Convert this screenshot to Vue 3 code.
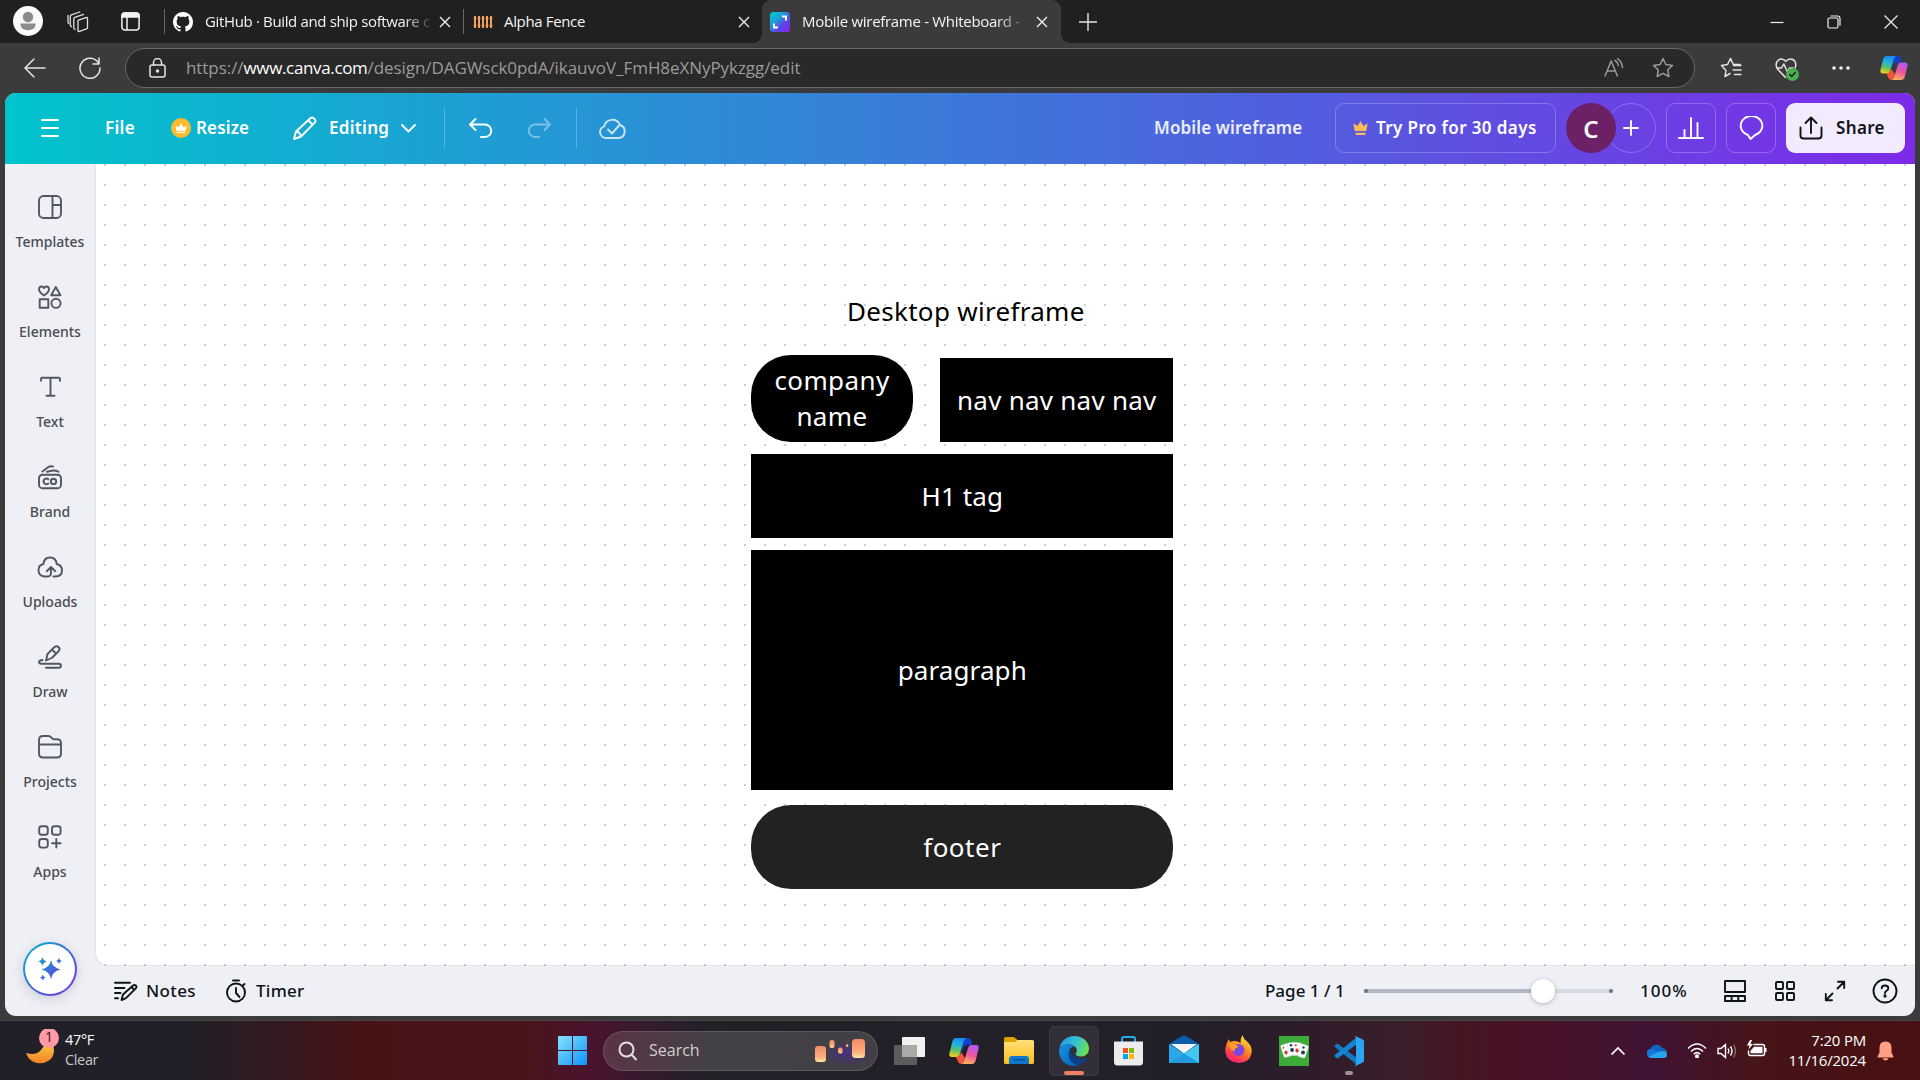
<script setup>
const tools = [
  { id: 'templates', label: 'Templates' },
  { id: 'elements', label: 'Elements' },
  { id: 'text', label: 'Text' },
  { id: 'brand', label: 'Brand' },
  { id: 'uploads', label: 'Uploads' },
  { id: 'draw', label: 'Draw' },
  { id: 'projects', label: 'Projects' },
  { id: 'apps', label: 'Apps' },
]
</script>

<template>
  <div class="screen">
    <!-- Tab strip -->
    <div class="tabs">
      <svg class="profile" width="30" height="30" viewBox="0 0 30 30"><circle cx="15" cy="15" r="15" fill="#fafafa"/><circle cx="15" cy="11" r="5.2" fill="#8c8c8c"/><path d="M7.5 17.5h15v1c0 3.600-3.400 5.700-7.500 5.700s-7.500-2.100-7.500-5.700z" fill="#8c8c8c"/></svg>
      <svg class="spaces" width="22" height="22" viewBox="0 0 22 22" fill="none" stroke="#e0e0e0" stroke-width="1.300" stroke-linejoin="round" stroke-linecap="round"><path d="M11.500 9.200l7.500-2.600q1.500-.4 1.500 1v8.800q0 1.200-1 1.500l-7 2.500q-1.500.4-1.500-1v-9.200q0-.8.5-1zM8 18.300q-1.200-.2-1.200-1.500V8q0-1.300 1-1.700l8.700-3M4.500 15.500q-1.200-.2-1.200-1.500V5.500q0-1.300 1-1.700l8.500-2.800M1.800 12.500Q1 12 1 11V4.500"/></svg>
      <svg class="tabact" width="19" height="19" viewBox="0 0 19 19" fill="none" stroke="#f2f2f2" stroke-width="1.500"><rect x=".9" y=".9" width="17.200" height="17.200" rx="3"/><path d="M1 3.600Q1 1 3.600 1h11.800Q18 1 18 3.600V5H1z" fill="#f2f2f2"/><path d="M6 5v13"/></svg>
      <div class="sep s1"></div>
      <div class="tab t1">
        <svg width="20" height="20" viewBox="0 0 16 16" fill="#fff"><path d="M8 0C3.580 0 0 3.580 0 8c0 3.540 2.290 6.530 5.470 7.590.4.070.55-.17.55-.38 0-.19-.01-.82-.01-1.490-2.010.37-2.530-.49-2.690-.94-.09-.23-.48-.94-.82-1.130-.28-.15-.68-.52-.01-.53.630-.010 1.080.580 1.230.820.720 1.210 1.870.870 2.330.660.070-.52.280-.87.510-1.070-1.780-.2-3.640-.89-3.640-3.950 0-.87.310-1.590.820-2.150-.08-.2-.36-1.020.080-2.120 0 0 .67-.21 2.200.820.640-.18 1.320-.27 2-.27s1.360.090 2 .27c1.530-1.040 2.200-.82 2.200-.82.440 1.100.160 1.920.080 2.120.510.560.820 1.270.820 2.150 0 3.070-1.870 3.750-3.650 3.950.290.250.540.730.540 1.480 0 1.070-.01 1.930-.01 2.200 0 .210.150.460.550.380A8.010 8.010 0 0 0 16 8c0-4.420-3.580-8-8-8z"/></svg>
        <span class="ttl">GitHub · Build and ship software c</span>
        <svg class="x" width="12" height="12" viewBox="0 0 12 12"><path d="M1 1l10 10M11 1L1 11"/></svg>
      </div>
      <div class="sep s2"></div>
      <div class="tab t2">
        <svg width="20" height="14" viewBox="0 0 20 14"><path d="M0 3.500h20M0 10.500h20" stroke="#7c4a28" stroke-width="1.500"/><path d="M2 1v12M6 1v12M10 1v12M14 1v12M18 1v12" stroke="#f0a060" stroke-width="2"/></svg>
        <span class="ttl">Alpha Fence</span>
        <svg class="x" width="12" height="12" viewBox="0 0 12 12"><path d="M1 1l10 10M11 1L1 11"/></svg>
      </div>
      <div class="tab t3">
        <svg width="20" height="20" viewBox="0 0 20 20"><defs><linearGradient id="fav" x1="0" y1="0" x2="1" y2="1"><stop offset="0" stop-color="#00c9cf"/><stop offset=".35" stop-color="#18a5d5"/><stop offset=".65" stop-color="#5b43e8"/><stop offset="1" stop-color="#8a25e8"/></linearGradient></defs><rect width="20" height="20" rx="3.500" fill="url(#fav)"/><path d="M12 4.500h4v4M4 11.500v4h4" fill="none" stroke="#fff" stroke-width="2"/></svg>
        <span class="ttl">Mobile wireframe - Whiteboard -</span>
        <svg class="x" width="12" height="12" viewBox="0 0 12 12"><path d="M1 1l10 10M11 1L1 11"/></svg>
      </div>
      <svg class="newtab" width="18" height="18" viewBox="0 0 18 18"><path d="M9 0v18M0 9h18" stroke="#e6e6e6" stroke-width="1.400"/></svg>
      <div class="winbtns">
        <svg width="14" height="14" viewBox="0 0 14 14"><path d="M.5 7.500h13"/></svg>
        <svg width="14" height="14" viewBox="0 0 14 14"><rect x="1" y="3" width="10" height="10" rx="1.500"/><path d="M3.500 1h7Q13 1 13 3.500v7"/></svg>
        <svg width="14" height="14" viewBox="0 0 14 14"><path d="M.5.5l13 13M13.500.5l-13 13"/></svg>
      </div>
    </div>

    <!-- Address row -->
    <div class="nav">
      <svg class="back" width="22" height="20" viewBox="0 0 22 20"><path d="M10 1L1 10l9 9M1 10h20"/></svg>
      <svg class="reload" width="22" height="22" viewBox="0 0 22 22"><path d="M19.500 6A10 10 0 1 0 21 11M20 1v6h-6"/></svg>
      <div class="address">
        <svg class="lock" width="17" height="20" viewBox="0 0 17 20"><rect x="1" y="7" width="15" height="12" rx="2"/><path d="M4.500 7V4.500a4 4 0 0 1 8 0V7"/><circle cx="8.500" cy="13" r="1" fill="#fff"/></svg>
        <span class="url">https://<b>www.canva.com</b>/design/DAGWsck0pdA/ikauvoV_FmH8eXNyPykzgg/edit</span>
        <svg class="aloud" width="20" height="20" viewBox="0 0 20 20"><path d="M1 18L7.200 3l6.200 15M3 13h8.500M11 2.500q3 1.800 3.500 5M13.500.8q4.500 2.500 5 8.700"/></svg>
        <svg class="star" width="22" height="22" viewBox="0 0 22 22"><path d="M11 1.500l2.900 6 6.600.9-4.800 4.600 1.200 6.500-5.900-3.200-5.900 3.200 1.200-6.500L1.500 8.400l6.600-.9z"/></svg>
      </div>
      <svg class="favs" width="22" height="22" viewBox="0 0 22 22"><path d="M6 13.500L1.500 8.400l6-.9L10.500 1.500l2.900 6h6.600M10 16.500l-5 3 1-6M13.500 8.500H21M13 13h8M14.500 17.500H21"/></svg>
      <svg class="heart" width="24" height="24" viewBox="0 0 24 24"><path d="M10.500 20.500L2.500 12C-.5 7.500 2 2 6.500 2q2.600 0 4.300 2.400Q12.600 2 15.500 2c4.500 0 6.500 5 4.500 9M2 11h4.500l2.300-4 3.700 8 2-4H18"/><circle cx="17.500" cy="17.500" r="6.500" fill="#4caf50" stroke="none"/><path d="M14.700 17.500l2 2 3.600-4" stroke="#1e1e1e"/></svg>
      <svg class="dots" width="18" height="4" viewBox="0 0 18 4"><g fill="#f2f2f2" stroke="none"><circle cx="2" cy="2" r="1.800"/><circle cx="9" cy="2" r="1.800"/><circle cx="16" cy="2" r="1.800"/></g></svg>
      <svg class="copilot" width="28" height="26" viewBox="0 0 30 28"><use href="#copilot"/></svg>
    </div>

    <!-- Editor -->
    <div class="app">
      <header class="head">
        <svg class="burger" width="18" height="18" viewBox="0 0 18 18"><path d="M1 1h16M1 9h16M1 17h16"/></svg>
        <span class="file">File</span>
        <svg class="crown" width="20" height="20" viewBox="0 0 20 20"><circle cx="10" cy="10" r="10" fill="#fdbc2e"/><path d="M5.500 12.800L4.300 7.500l3.200 2L10 5.500l2.500 4 3.200-2-1.200 5.300zM5.800 13.700h8.400v1.300H5.800z" fill="#fff"/></svg>
        <span class="resize">Resize</span>
        <svg class="pencil" width="24" height="24" viewBox="0 0 24 24"><path d="M1 23l2-7.500L17.300 2.200q1.700-1.500 3.500.2l.8.800q1.700 1.800.2 3.400L8 20.500zM15.500 4.500l4.200 4.200M3 15.500q3.500 0 5 5"/></svg>
        <span class="editing">Editing</span>
        <svg class="chev" width="15" height="9" viewBox="0 0 15 9"><path d="M1 1l6.500 6.500L14 1"/></svg>
        <i class="vr"></i>
        <svg class="undo" width="24" height="20" viewBox="0 0 24 20"><path d="M6.500 1L1 6.500 6.500 12M1.500 6.500H16a6.200 6.200 0 0 1 0 12.500h-4"/></svg>
        <svg class="redo" width="24" height="20" viewBox="0 0 24 20"><path d="M17.500 1L23 6.500 17.500 12M22.500 6.500H8a6.200 6.200 0 0 0 0 12.500h4"/></svg>
        <i class="vr v2"></i>
        <svg class="cloud" width="27" height="22" viewBox="0 0 27 22"><path d="M12 21H7a6 6 0 0 1-1.800-11.700A8.300 8.300 0 0 1 21 8a6.700 6.700 0 0 1-1 13zM9 12.500l4 4L20 8.500"/></svg>
        <span class="doc">Mobile wireframe</span>
        <div class="pro"><svg width="15" height="16" viewBox="0 0 15 16" fill="#ffb956" stroke="none"><path d="M1.800 11L.3 3.500 4.600 6 7.500 1l2.900 5 4.300-2.500L13.200 11zM2.500 12.800h10V15h-10z"/></svg><span>Try Pro for 30 days</span></div>
        <div class="people"><div class="add"><svg width="16" height="16" viewBox="0 0 16 16"><path d="M8 1v14M1 8h14"/></svg></div><div class="me">C</div></div>
        <div class="sq"><svg width="26" height="22" viewBox="0 0 26 22"><path d="M1 21h24M6.500 21v-8M13 21V1M19.500 21V6"/></svg></div>
        <div class="sq"><svg width="25" height="24" viewBox="0 0 25 24"><path d="M9 19A10.800 9.800 0 1 1 16 19L11.500 23z"/></svg></div>
        <div class="share"><svg width="24" height="24" viewBox="0 0 24 24"><path d="M12 17V2M6.500 7L12 1.500 17.500 7M1.500 11.500v8q0 3 3 3h15q3 0 3-3v-8"/></svg><span>Share</span></div>
      </header>

      <div class="body">
        <aside class="side">
          <div v-for="t in tools" :key="t.id" class="tool">
            <svg width="26" height="26" viewBox="0 0 26 26">
              <g v-if="t.id === 'templates'"><rect x="2" y="2" width="22" height="22" rx="4.500"/><path d="M15.500 2v22M15.500 11H24"/></g>
              <g v-else-if="t.id === 'elements'"><path d="M7 11.500Q2 8 2 5.500 2 2.500 4.500 2.500q1.800 0 2.500 1.600.7-1.600 2.500-1.600Q12 2.500 12 5.500 12 8 7 11.500zM18.800 3l4.700 8.200H14.200zM2.700 15.200h8.600v8.600H2.700z"/><circle cx="19" cy="19.300" r="4.600"/></g>
              <g v-else-if="t.id === 'text'"><path d="M4 6.800V5q0-1.200 1.200-1.200h16.600q1.200 0 1.200 1.200v1.800M13.500 4v17.500M9.500 21.800h8"/></g>
              <g v-else-if="t.id === 'brand'"><rect x="2" y="10.700" width="22" height="13.500" rx="3.500"/><path d="M11.300 15.300a2.800 2.800 0 1 0 0 4.200M5.500 7.500L11 3.300q2-1.500 5-.8M10 7.800l4.500-1q4-.8 7 1"/><circle cx="16.500" cy="17.400" r="2.700"/></g>
              <g v-else-if="t.id === 'uploads'"><path d="M10.500 22.500H7.500Q1.500 22 1.500 16.200 1.500 11 6.500 10 7 3.500 13 3.500t6.700 6.500q5.300 1.300 5.300 6.500 0 6-7 6h-1.500M10.500 22.500Q14 22.500 14 19v-5M9.700 17.200L14 13l4.200 4.200"/></g>
              <g v-else-if="t.id === 'draw'"><path d="M9 16.500l1.500-6.500 7-7q2-1.700 4 0t.3 4l-7 7zM15 5.500l4 4M5.500 16Q2 16.300 2 18t2.500 1.700h17q2.500 0 2.500 2t-2.500 2H9"/></g>
              <g v-else-if="t.id === 'projects'"><path d="M2 9V6q0-4 4-4h5.500q1.500 0 2.500 1.200l1.500 1.500q.7.600 1.700.6H20q4 0 4 4V19.500q0 4-4 4H6q-4 0-4-4zM2 10.500h22"/></g>
              <g v-else><rect x="2.200" y="2.200" width="8.600" height="8.600" rx="2.500"/><rect x="15" y="2.200" width="8.600" height="8.600" rx="2.500"/><rect x="2.200" y="15" width="8.600" height="8.600" rx="2.500"/><path d="M19.300 15v8.600M15 19.300h8.600"/></g>
            </svg>
            <span>{{ t.label }}</span>
          </div>
          <div class="magic">
            <svg width="26" height="26" viewBox="0 0 26 26"><defs><linearGradient id="mg" x1="0" y1="0" x2="1" y2="1"><stop offset="0" stop-color="#12a5b8"/><stop offset=".5" stop-color="#3b6fd6"/><stop offset="1" stop-color="#7a35dd"/></linearGradient></defs><path fill="url(#mg)" d="M14 4q1.500 8 9.500 9.500Q15.500 15 14 23.500 12.500 15 4.500 13.500 12.500 12 14 4zM5.500 1q.7 3.800 4.500 4.500Q6.200 6.200 5.500 10 4.800 6.200 1 5.500 4.800 4.800 5.500 1zM22 2q.5 2.500 3 3-2.500.5-3 3-.5-2.500-3-3 2.500-.5 3-3zM5.800 18.500q.5 2.500 3 3-2.500.5-3 3-.5-2.500-3-3 2.500-.5 3-3z"/></svg>
          </div>
        </aside>
        <main class="work">
          <div class="canvas">
            <p class="title">Desktop wireframe</p>
            <div class="shape company">company<br>name</div>
            <div class="shape navs">nav nav nav nav</div>
            <div class="shape h1">H1 tag</div>
            <div class="shape para">paragraph</div>
            <div class="shape foot">footer</div>
          </div>
          <footer class="status">
            <svg class="i-notes" width="24" height="20" viewBox="0 0 24 20"><path d="M1 1.800h15M1 7h9.500M1 12h5.500M1 17.200h3M7.500 19l1.500-5.500 10-9q1.500-1.200 2.800 0t0 2.800l-9.800 9.900zM17.500 6l2.800 2.800"/></svg>
            <span class="notes">Notes</span>
            <svg class="i-timer" width="22" height="24" viewBox="0 0 22 24"><circle cx="11" cy="13.500" r="9"/><path d="M8 1.500h6M11 9v5l3.500 4M17.500 6.800L19.500 5"/></svg>
            <span class="timer">Timer</span>
            <span class="page">Page 1 / 1</span>
            <div class="slider"><div class="fill"></div><div class="thumb"></div></div>
            <span class="pct">100%</span>
            <svg class="i-a" width="24" height="24" viewBox="0 0 24 24"><path d="M2 2h20v11H2zM2 17h20v5H2zM8.600 17v5M15.300 17v5"/></svg>
            <svg class="i-b" width="24" height="24" viewBox="0 0 24 24"><rect x="3" y="3" width="7" height="7" rx="1"/><rect x="14" y="3" width="7" height="7" rx="1"/><rect x="3" y="14" width="7" height="7" rx="1"/><rect x="14" y="14" width="7" height="7" rx="1"/></svg>
            <svg class="i-c" width="24" height="24" viewBox="0 0 24 24"><path d="M14.500 9.500L21 3M15 2.800h6.200V9M9.500 14.500L3 21M2.800 15v6.200H9"/></svg>
            <svg class="i-d" width="26" height="26" viewBox="0 0 26 26"><circle cx="13" cy="13" r="11.500"/><path d="M9.700 10.300Q9.700 7.500 13 7.500t3.300 2.800q0 1.700-1.800 2.500-1.500.7-1.500 2.400"/><circle cx="13" cy="18" r=".7" fill="#0e1318"/></svg>
          </footer>
        </main>
      </div>
    </div>

    <!-- Taskbar -->
    <div class="taskbar">
      <div class="weather">
        <svg width="56" height="44" viewBox="0 0 56 44"><defs><linearGradient id="moon" x1="0" y1="0" x2="0" y2="1"><stop offset="0" stop-color="#ffd84a"/><stop offset="1" stop-color="#f08228"/></linearGradient></defs><path fill="url(#moon)" d="M6 24q10 3 15-3 5-5 3-12 10 3 10 12 0 7-5 10.500T17 34Q9 32.500 6 24z"/><circle cx="29" cy="9" r="10" fill="#ff99a4"/></svg>
        <b>1</b>
        <div class="wt"><span>47°F</span><em>Clear</em></div>
      </div>
      <svg class="win" width="29" height="29" viewBox="0 0 29 29"><defs><linearGradient id="wg" x1="0" y1="0" x2="1" y2="1"><stop offset="0" stop-color="#8be3ff"/><stop offset="1" stop-color="#0a92f8"/></linearGradient></defs><path fill="url(#wg)" d="M0 1q0-1 1-1h13v14H0zM15 0h13q1 0 1 1v13H15zM0 15h14v14H1q-1 0-1-1zM15 15h14v13q0 1-1 1H15z"/></svg>
      <div class="search">
        <svg width="20" height="20" viewBox="0 0 20 20" fill="none" stroke="#e4e0e2" stroke-width="2"><circle cx="8.500" cy="8.500" r="7"/><path d="M13.500 13.500L18.500 19"/></svg>
        <span>Search</span>
        <svg class="lant" width="64" height="32" viewBox="0 0 64 32"><defs><linearGradient id="lg" x1="0" y1="0" x2="0" y2="1"><stop offset="0" stop-color="#f08a66"/><stop offset=".7" stop-color="#ffb07c"/><stop offset="1" stop-color="#ffe7a0"/></linearGradient><radialGradient id="lr"><stop offset="0" stop-color="#4a2f80"/><stop offset="1" stop-color="#4a2f80" stop-opacity="0"/></radialGradient></defs><ellipse cx="38" cy="19" rx="26" ry="13" fill="url(#lr)"/><g fill="url(#lg)"><rect x="5" y="11" width="11" height="16" rx="3"/><rect x="19.500" y="5" width="5" height="8" rx="2"/><rect x="28" y="12.500" width="4.500" height="6" rx="1.800"/><rect x="36" y="9" width="2.200" height="3" rx="1"/><rect x="42" y="4" width="13" height="19" rx="3.500"/></g></svg>
      </div>
      <svg class="tv" width="31" height="28" viewBox="0 0 31 28"><rect x="8" y="0" width="23" height="20" rx="1" fill="#f1f1f1"/><rect x="0" y="8" width="23" height="20" rx="1" fill="#5c5c5e"/><rect x="8" y="8" width="15" height="12" fill="#a9a9a9"/></svg>
      <svg class="cp" width="30" height="28" viewBox="0 0 30 28">
        <defs>
          <linearGradient id="c1" x1=".5" y1="0" x2=".3" y2="1"><stop offset="0" stop-color="#1b8af0"/><stop offset=".35" stop-color="#22b4e0"/><stop offset=".65" stop-color="#5cc06a"/><stop offset="1" stop-color="#f5cf1c"/></linearGradient>
          <linearGradient id="c2" x1=".6" y1="0" x2=".3" y2="1"><stop offset="0" stop-color="#b05af0"/><stop offset=".5" stop-color="#f0559a"/><stop offset="1" stop-color="#ffb35c"/></linearGradient>
          <g id="copilot" stroke="none"><path d="M15 1h4q2.500 0 3.200 2.500L23.500 8H18q-2.200 0-3 2.500L13 17z" fill="#1440c8"/><path d="M7 1h10.500q-2 .8-2.800 3.500L11 17q-.9 3-3.500 3H3Q-.5 20 .5 16L3.500 4Q4.300 1 7 1z" fill="url(#c1)"/><path d="M7 20h1q2.200-.5 3-3l1.500-1.500L16 21l-1.500 4q-.8 1.700-2 2-2.700 0-3.500-2.500z" fill="#f5543c"/><path d="M23 27H12.500q2-.8 2.800-3.500L19 11q.9-3 3.500-3H27q3.500 0 2.500 4l-3 12q-.8 3-3.500 3z" fill="url(#c2)"/></g>
        </defs><use href="#copilot"/>
      </svg>
      <svg class="ex" width="30" height="27" viewBox="0 0 30 27"><defs><linearGradient id="eg" x1="0" y1="0" x2="0" y2="1"><stop offset="0" stop-color="#ffe07a"/><stop offset="1" stop-color="#fcbc1c"/></linearGradient></defs><path d="M0 1.500Q0 0 1.500 0H9q1.200 0 2 .8L13.500 3v6H0z" fill="#dfa000"/><path d="M0 5h11l2.500-2H28.500Q30 3 30 4.500v21q0 1.500-1.500 1.500h-27Q0 27 0 25.500z" fill="url(#eg)"/><path d="M5 27v-5q0-3 3-3h14q3 0 3 3v5z" fill="#1179cc"/><path d="M9 22.800h12" stroke="#0a4b86" stroke-width="1.200"/></svg>
      <div class="edge">
        <svg width="30" height="30" viewBox="0 0 30 30"><defs><linearGradient id="g1" x1="0" y1=".3" x2="1" y2=".6"><stop offset="0" stop-color="#1e9ce6"/><stop offset=".5" stop-color="#35c1d8"/><stop offset="1" stop-color="#6fe04a"/></linearGradient><linearGradient id="g2" x1="0" y1="0" x2="1" y2="1"><stop offset="0" stop-color="#1792e0"/><stop offset="1" stop-color="#0a5fb8"/></linearGradient></defs><path d="M.3 13C1.300 5 8 0 15 0c9 0 15 6 15 12.500 0 5-3.500 8-8 8-3.500 0-5.500-1.500-5.500-2.500 0-.8 1.300-1.300 1.300-3.500C17.800 11 14 8.500 10 8.500 5 8.500 1.500 10.500.3 13z" fill="url(#g1)"/><path d="M.3 13C2 10 5.500 8.500 10 8.500c2.500 0 4.500 1 5.500 2-4 .5-6 4-5.500 8 .6 5.500 5 9 9.500 10.700Q17.500 30 15 30 6.500 30 2.200 23-.5 18.500.3 13z" fill="url(#g2)"/><path d="M11 13.500q-2.200 3-1 7.500 2 6.500 8.500 8.500 6.200-1.500 9.700-6.800.3-.7-.6-.4Q24 23.800 19.500 22.500 13 20.500 11 13.500z" fill="#0b3f86"/></svg>
        <i></i>
      </div>
      <svg class="store" width="29" height="30" viewBox="0 0 29 30"><path d="M8 6V3q0-2 2-2h9q2 0 2 2v3" fill="none" stroke="#1eb0ea" stroke-width="2"/><path d="M0 5.500h29V26q0 3.500-3.500 3.500h-22Q0 29.500 0 26z" fill="#ececec"/><path d="M9 12h5v5H9z" fill="#f25022"/><path d="M15 12h5v5h-5z" fill="#7fba00"/><path d="M9 18h5v5H9z" fill="#00a4ef"/><path d="M15 18h5v5h-5z" fill="#ffb900"/></svg>
      <svg class="mail" width="30" height="28" viewBox="0 0 30 28"><path d="M0 9L13.500.8q1.500-.9 3 0L30 9v5H0z" fill="#0b5cab"/><path d="M0 9l15 9.500L30 9v19H0z" fill="#2ba7ea"/><path d="M2 9h26L15 18.500z" fill="#f3f3f3"/><path d="M30 9v19L15 18.500z" fill="#43c8f5"/><path d="M0 28l15-9.500L30 28z" fill="#229bdf"/></svg>
      <svg class="ff" width="27" height="28" viewBox="0 0 27 28"><defs><linearGradient id="fg" x1=".8" y1="0" x2=".3" y2="1"><stop offset="0" stop-color="#ffe843"/><stop offset=".45" stop-color="#ff9020"/><stop offset=".8" stop-color="#ff3850"/><stop offset="1" stop-color="#e8207c"/></linearGradient></defs><path d="M17.500 0q1 4 4 6 5.500 4.500 5.200 10.500Q26 27 14 28 2 27.500.3 17 0 10 4 4q.2 2 1.200 3Q8 5.500 10 6q3 0 5.500 2 0-5 2-8z" fill="url(#fg)"/><circle cx="13.500" cy="15" r="6" fill="#7b45e0"/><path d="M3.500 9q3-1.500 6 .5 2.500.5 4 2-1 1.500-3.500 2-1 1.500 0 3-4.500-1.500-6.500-7.500z" fill="#ffa02a"/></svg>
      <svg class="cards" width="30" height="30" viewBox="0 0 30 30"><rect width="30" height="30" fill="#3dab3a"/><g fill="#fff" stroke="#b9c9b9" stroke-width=".4"><rect x="3" y="8" width="8" height="13" rx="1.500" transform="rotate(-18 7 14)"/><rect x="9" y="6.500" width="8" height="13" rx="1.500" transform="rotate(-6 13 13)"/><rect x="14.500" y="6.500" width="8" height="13" rx="1.500" transform="rotate(7 18 13)"/><rect x="20" y="8.500" width="8" height="13" rx="1.500" transform="rotate(18 24 15)"/></g><g fill="#d33"><path d="M7 14l2 2.500L7 19l-2-2.500zM4.500 10.500l1 1.300-1 1.300-1-1.300zM18 12l2 2.500-2 2.500-2-2.500zM16.800 8l1.200 1.300-1.200 1.300-1.200-1.300z"/></g><g fill="#173a6b"><circle cx="13" cy="14" r="1.900"/><circle cx="12" cy="9.200" r="1.200"/><circle cx="24" cy="16.500" r="2"/><circle cx="24.500" cy="11.500" r="1.200"/></g></svg>
      <div class="vs">
        <svg width="30" height="30" viewBox="0 0 30 30"><path d="M.8 9.500l1.600-1.500q.9-.7 1.800 0L23 22v7L.8 11q-.8-.8 0-1.500z" fill="#1478be"/><path d="M.8 20.500l1.600 1.500q.9.700 1.800 0L23 8V1L.8 19q-.8.800 0 1.500z" fill="#1285d2"/><path d="M22 .3l6.800 3.200q1.200.6 1.200 2v19q0 1.400-1.200 2L22 29.700q-1 .3-1.800-.6 1.800.6 1.800-1.600v-25q0-2.200-1.800-1.600.8-.9 1.800-.6z" fill="#2aa5f2"/></svg>
        <i></i>
      </div>
      <div class="tray">
        <svg class="up" width="16" height="10" viewBox="0 0 16 10"><path d="M1.500 8.500L8 2l6.500 6.500" fill="none" stroke="#fff" stroke-width="1.700"/></svg>
        <svg class="od" width="20" height="14" viewBox="0 0 20 14"><path d="M3.500 5A6.300 6.300 0 0 1 15 4q4.500.5 5 5l-8 3L1 12q-2.500-5 2.500-7z" fill="#0e66c2"/><path d="M0 9q0-4 4-4 2 0 4 1.500l8 5.500-4 2H4.500Q0 14 0 9z" fill="#1479d8"/><path d="M2 12.500L11 8q2-1 4-.6Q20 7 20 10.700 20 14 16.500 14H4.500Q3 14 2 12.500z" fill="#2ba4ee"/></svg>
        <svg class="wf" width="20" height="15" viewBox="0 0 20 15" fill="none" stroke="#fff" stroke-width="1.600"><path d="M1 5.500q9-9 18 0M4 8.500q6-6 12 0M6.800 11.200q3.200-3.200 6.400 0"/><circle cx="10" cy="13.200" r="1.200" fill="#fff"/></svg>
        <svg class="sp" width="20" height="16" viewBox="0 0 20 16" fill="none" stroke="#fff" stroke-width="1.400"><path d="M1 5.500h3L8.500 1.500v13L4 10.500H1zM11 5.500q1.500 2.500 0 5M13.500 3.500q3 4.500 0 9"/><path d="M16.500 1.500q4 6.500 0 13" stroke="#8a6a6c"/></svg>
        <svg class="bt" width="21" height="18" viewBox="0 0 21 18"><path d="M7.500 4.500h9q2 0 2 2v7q0 2-2 2h-12q-2 0-2-2V10.500" fill="none" stroke="#fff" stroke-width="1.400"/><path d="M8 6.700h8.500v6.600h-12v-2.500zM19 8h1.500v4H19zM4 0L1 5.500h2.500L2.500 9.500 7 4H4.500L6 0z" fill="#fff"/></svg>
        <div class="clock"><span>7:20 PM</span><span>11/16/2024</span></div>
        <svg class="bell" width="17" height="20" viewBox="0 0 17 20" fill="#ffa084"><path d="M8.500.5q6 0 6 6v5l2 4q.2 1-.8 1H1.300q-1 0-.8-1l2-4v-5q0-6 6-6zM5.500 17.300h6q-.8 2.200-3 2.200t-3-2.200z"/></svg>
      </div>
    </div>
  </div>
</template>

<style>
body { margin: 0; background: #3b3b3b; overflow: hidden; }
</style>

<style scoped>
* { box-sizing: border-box; }
svg { display: block; flex: none; }
.screen { width: 1920px; height: 1080px; background: #3b3b3b; display: flex; flex-direction: column; font-family: "Noto Sans", "Open Sans", sans-serif; overflow: hidden; white-space: nowrap; }

.tabs { height: 43px; flex: none; background: #202020; display: flex; align-items: center; }
.profile { margin: 0 0 1px 13px; }
.spaces { margin-left: 24px; }
.tabact { margin-left: 32px; }
.sep { width: 1px; height: 25px; background: #686868; }
.s1 { margin-left: 24px; }
.tab { display: flex; align-items: center; height: 43px; color: #f4f4f4; font: 15px "Open Sans", sans-serif; }
.tab .ttl { margin-left: 12px; margin-bottom: 2px; letter-spacing: -0.35px; }
.tab .x { stroke: #f0f0f0; stroke-width: 1.4; margin-top: 1px; }
.t1 { width: 298px; padding-left: 8px; }
.t1 .ttl, .t3 .ttl { -webkit-mask-image: linear-gradient(to right, #000 88%, rgba(0,0,0,.15)); mask-image: linear-gradient(to right, #000 88%, rgba(0,0,0,.15)); }
.t1 .ttl { width: 225px; }
.t1 .x { margin-left: 9px; }
.t2 { width: 298px; padding-left: 9px; }
.t2 .ttl { width: 234px; margin-left: 11px; }
.t2 .x { margin-left: 0; }
.t3 { position: relative; width: 299px; padding-left: 8px; background: #3b3b3b; border-radius: 9px 9px 0 0; }
.t3 .ttl { width: 221px; letter-spacing: -0.3px; }
.t3 .x { margin-left: 13px; }
.t3::before, .t3::after { content: ""; position: absolute; bottom: 0; width: 9px; height: 9px; }
.t3::before { left: -9px; background: radial-gradient(circle at 0 0, #202020 8.5px, #3b3b3b 9px); }
.t3::after { right: -9px; background: radial-gradient(circle at 100% 0, #202020 8.5px, #3b3b3b 9px); }
.newtab { margin-left: 18px; }
.winbtns { display: flex; gap: 43px; margin-left: auto; margin-right: 22px; fill: none; stroke: #f0f0f0; stroke-width: 1.2; }

.nav { height: 50px; flex: none; display: flex; align-items: center; fill: none; stroke: #e4e4e4; stroke-width: 1.5; }
.nav svg { stroke-linecap: round; stroke-linejoin: round; }
.back { margin-left: 24px; }
.reload { margin-left: 33px; }
.address { width: 1570px; height: 40px; margin-left: 24px; background: #292929; border: 1px solid #686868; border-radius: 20px; display: flex; align-items: center; }
.lock { margin-left: 23px; }
.url { width: 616px; margin-left: 20px; margin-bottom: 1px; color: #9b9b9b; font: 17px "Open Sans", sans-serif; letter-spacing: -0.06px; }
.url b { font-weight: 400; color: #fff; letter-spacing: -0.35px; }
.aloud { margin-left: 802px; stroke: #9a9a9a; }
.star { margin-left: 28px; stroke: #9a9a9a; }
.favs { margin-left: 25px; }
.heart { margin-left: 33px; margin-top: 2px; }
.dots { margin-left: 33px; }
.copilot { margin-left: 30px; }

.app { width: 1910px; height: 923px; margin-left: 5px; flex: none; border-radius: 11px; overflow: hidden; display: flex; flex-direction: column; background: #eff0f5; }
.head { height: 71px; padding-bottom: 1px; flex: none; display: flex; align-items: center; background: linear-gradient(90deg, #00c4cc, #2a90d6 34%, #5060dd 66%, #7d2ae8); color: #fff; font-weight: 600; font-size: 17px; fill: none; stroke: #fff; stroke-width: 1.9; stroke-linecap: round; stroke-linejoin: round; }
.head span { position: relative; top: -1px; }
.burger { margin-left: 36px; }
.file { width: 35px; margin-left: 46px; letter-spacing: .3px; }
.crown { margin-left: 31px; stroke: none; }
.resize { width: 56px; margin-left: 5px; letter-spacing: .15px; }
.pencil { margin-left: 41px; }
.editing { width: 61px; margin-left: 12px; letter-spacing: .3px; }
.chev { margin-left: 11px; }
.vr { width: 1px; height: 40px; margin-left: 28px; background: rgba(255,255,255,.25); }
.undo { margin-left: 24px; }
.redo { margin-left: 34px; opacity: .4; }
.v2 { margin-left: 25px; }
.cloud { margin-left: 22px; opacity: .75; }
.doc { width: 150px; margin-left: 528px; letter-spacing: .12px; color: #eeeefc; }
.pro { width: 221px; height: 50px; margin-left: 31px; border: 1px solid rgba(255,255,255,.24); border-radius: 9px; display: flex; align-items: center; gap: 8px; padding-left: 17px; letter-spacing: .4px; }
.people { position: relative; width: 90px; height: 50px; margin-left: 10px; }
.me, .add { position: absolute; top: 0; width: 50px; height: 50px; border-radius: 50%; display: flex; align-items: center; justify-content: center; }
.me { left: 0; background: #6c2166; font-size: 24px; }
.add { right: 0; border: 1px solid rgba(255,255,255,.24); }
.sq { width: 50px; height: 50px; margin-left: 10px; border: 1px solid rgba(255,255,255,.24); border-radius: 9px; display: flex; align-items: center; justify-content: center; }
.share { width: 119px; height: 50px; margin-left: 10px; border-radius: 9px; background: #f2eafd; color: #0e1318; stroke: #0e1318; display: flex; align-items: center; gap: 13px; padding-left: 13px; letter-spacing: .35px; }

.body { flex: 1; display: flex; min-height: 0; }
.side { width: 90px; display: flex; flex-direction: column; align-items: center; }
.tool { height: 90px; width: 90px; flex: none; padding-top: 30px; display: flex; flex-direction: column; align-items: center; fill: none; stroke: #53575d; stroke-width: 1.9; stroke-linecap: round; stroke-linejoin: round; color: #494c51; font-size: 14px; font-weight: 500; }
.tool span { margin-top: 12px; line-height: 20px; }
.magic { width: 54px; height: 54px; margin-top: 58px; border-radius: 50%; border: 2px solid transparent; background: linear-gradient(#fff,#fff) padding-box, linear-gradient(135deg, #00b8cc, #4a60d6 60%, #7d2ae8) border-box; display: flex; align-items: center; justify-content: center; box-shadow: 0 3px 12px rgba(50,60,90,.18); }
.work { flex: 1; display: flex; flex-direction: column; }
/* 20px dot grid: column mask over horizontal lines */
.canvas { position: relative; height: 802px; flex: none; border-left: 1px solid rgba(70,80,110,.16); border-bottom: 1px solid rgba(70,80,110,.16); border-bottom-left-radius: 13px; background-color: #fff; background-image: linear-gradient(90deg, transparent 2px, #fff 2px), linear-gradient(#c8cfdb 2px, #fff 2px); background-size: 20px 20px; background-position: 8px 0, 0 0; }
.title { position: absolute; left: 751px; top: 129px; margin: 0; font-size: 26px; line-height: 36px; letter-spacing: .3px; color: #000; }
.shape { position: absolute; background: #000; color: #fff; font-size: 26px; line-height: 36px; letter-spacing: .1px; display: flex; align-items: center; justify-content: center; text-align: center; }
.company { left: 655px; top: 191px; width: 162px; height: 87px; border-radius: 40px; padding-bottom: 2px; letter-spacing: .4px; }
.navs { left: 844.3px; top: 194px; width: 233px; height: 84px; letter-spacing: .25px; }
.h1 { left: 655.3px; top: 290px; width: 422px; height: 84px; }
.para { left: 655.3px; top: 386px; width: 422px; height: 240px; }
.foot { left: 655.3px; top: 641.3px; width: 422px; height: 84px; border-radius: 40px; background: #222; letter-spacing: .5px; }

.status { flex: 1; display: flex; align-items: center; color: #0e1318; font-size: 17px; font-weight: 500; fill: none; stroke: #0e1318; stroke-width: 1.9; stroke-linecap: round; stroke-linejoin: round; }
.i-notes { margin-left: 19px; }
.notes { width: 52px; margin-left: 8px; letter-spacing: .35px; }
.i-timer { margin-left: 27px; }
.timer { width: 50px; margin-left: 9px; letter-spacing: .25px; }
.status span { position: relative; top: -1px; }
.page { width: 80px; margin-left: 959px; }
.slider { position: relative; width: 249px; height: 4px; margin-left: 19px; border-radius: 2px; background: #d5d9e0; }
.fill { width: 179px; height: 4px; border-radius: 2px; background: #b1b8c3; }
.slider::before, .slider::after { content: ""; position: absolute; top: 0; width: 4px; height: 4px; border-radius: 50%; background: #6b7480; }
.slider::before { left: 0; }
.slider::after { right: 0; }
.thumb { position: absolute; left: 167px; top: -10px; width: 24px; height: 24px; border-radius: 50%; background: #fff; box-shadow: 0 1px 4px rgba(60,70,90,.35); }
.pct { width: 50px; margin-left: 27px; letter-spacing: 1px; }
.i-a { margin-left: 33px; }
.i-b { margin-left: 26px; }
.i-c { margin-left: 26px; }
.i-d { margin-left: 25px; }

.taskbar { height: 60px; margin-top: 4px; flex: none; display: flex; align-items: center; border-top: 1px solid #474446; background: linear-gradient(90deg, #211f27 0, #211f27 190px, #35191f 290px, #471416 350px, #4a1519 520px, #481330 600px, #361a2f 640px, #232028 700px, #211f27 1180px, #2d1c2a 1300px, #3a1e2b 1400px, #451622 1460px, #4a1228 1530px, #401334 1650px, #471417 1760px, #481013 1920px); color: #fff; font: 14.500px/20px "Open Sans", sans-serif; }
.weather { position: relative; display: flex; width: 558px; padding-left: 20px; align-items: center; }
.weather b { position: absolute; left: 45px; top: -2px; color: #2b1518; font-weight: 400; font-size: 14px; }
.wt { display: flex; flex-direction: column; margin-left: -11px; margin-bottom: 2px; letter-spacing: -0.35px; }
.wt em { font-style: normal; color: #c9c7ca; }
.search { width: 275px; height: 40px; margin-left: 16px; border-radius: 20px; background: linear-gradient(90deg, #5a3445, #434146 40%, #414044); border: 1px solid rgba(255,255,255,.13); display: flex; align-items: center; padding-left: 14px; font-size: 16px; color: #d2cfd1; }
.search span { width: 54px; margin-left: 11px; margin-bottom: 1px; }
.lant { margin-left: 107px; }
.tv { margin-left: 16px; }
.cp { margin-left: 24px; }
.ex { margin-left: 25px; }
.edge { position: relative; width: 50px; height: 50px; margin-left: 15px; border-radius: 5px; background: #323036; border: 1px solid #3d3a40; display: flex; align-items: center; justify-content: center; }
.edge i { position: absolute; left: 14px; bottom: 0; width: 20px; height: 4px; border-radius: 2px; background: #f57f66; }
.store { margin-left: 15px; }
.mail { margin-left: 26px; margin-bottom: 3px; }
.ff { margin-left: 26px; margin-bottom: 4px; }
.cards { margin-left: 27px; }
.vs { position: relative; width: 30px; margin-left: 25px; }
.vs i { position: absolute; left: 11px; top: 35px; width: 8px; height: 4px; border-radius: 2px; background: #9d9399; }
.tray { flex: 1; display: flex; align-items: center; }
.up { margin-left: 246px; }
.od { margin-left: 21px; }
.wf { margin-left: 20px; }
.sp { margin-left: 10px; }
.bt { margin-left: 9px; margin-bottom: 3px; }
.clock { display: flex; flex-direction: column; align-items: flex-end; width: 99px; margin-bottom: 2px; font-size: 15px; letter-spacing: -0.2px; }
.bell { margin-left: 11px; }
</style>
